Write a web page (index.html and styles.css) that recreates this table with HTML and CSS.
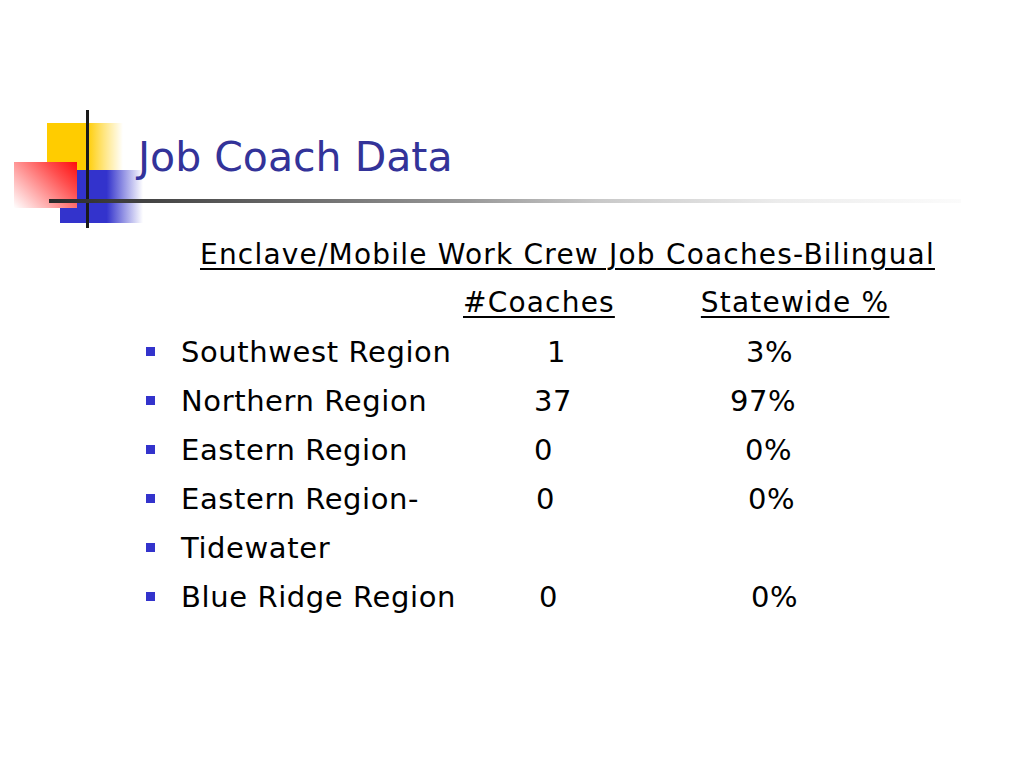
FILE: index.html
```html
<!DOCTYPE html>
<html>
<head>
<meta charset="utf-8">
<link rel="stylesheet" href="styles.css">
</head>
<body>
<div class="slide">
  <div class="logo">
    <div class="sq yellow"></div>
    <div class="sq blue"></div>
    <div class="sq blue-low"></div>
    <div class="sq red"></div>
    <div class="vline"></div>
    <div class="hline"></div>
  </div>
  <header class="title-wrap">
    <h1 class="title">Job Coach Data</h1>
  </header>
  <main class="body">
    <div class="subhead"><span class="u">Enclave/Mobile Work Crew Job Coaches-Bilingual</span></div>
    <div class="colhead">
      <span class="u h1c">#Coaches</span>
      <span class="u h2c">Statewide %</span>
    </div>
    <ul class="rows">
      <li class="row"><span class="label">Southwest Region</span><span class="num n-a">1</span><span class="pct p-a">3%</span></li>
      <li class="row"><span class="label">Northern Region</span><span class="num n-b">37</span><span class="pct p-b">97%</span></li>
      <li class="row"><span class="label">Eastern Region</span><span class="num n-c">0</span><span class="pct p-c">0%</span></li>
      <li class="row"><span class="label">Eastern Region-</span><span class="num n-d">0</span><span class="pct p-d">0%</span></li>
      <li class="row"><span class="label">Tidewater</span></li>
      <li class="row"><span class="label">Blue Ridge Region</span><span class="num n-e">0</span><span class="pct p-e">0%</span></li>
    </ul>
  </main>
</div>
</body>
</html>
```

FILE: styles.css
```css
html, body {
  margin: 0;
  padding: 0;
  background: #ffffff;
}
.slide {
  position: relative;
  width: 1024px;
  height: 768px;
  overflow: hidden;
  font-family: "DejaVu Sans", Tahoma, sans-serif;
  color: #000;
}
.logo {
  position: absolute;
  left: 0;
  top: 0;
  width: 1024px;
  height: 240px;
}
.sq { position: absolute; }
.yellow {
  left: 47px; top: 123px; width: 76px; height: 47px;
  background: linear-gradient(to right, #ffcc00 0%, #ffcc00 52%, rgba(255,204,0,0.5) 75%, rgba(255,255,255,0) 100%);
}
.blue {
  left: 77px; top: 170px; width: 66px; height: 53px;
  background: linear-gradient(to right, #3333cc 0%, #3333cc 45%, rgba(51,51,204,0.5) 72%, rgba(255,255,255,0) 100%);
}
.blue-low {
  left: 60px; top: 200px; width: 20px; height: 23px;
  background: #3333cc;
}
.red {
  left: 14px; top: 162px; width: 63px; height: 46px;
  background: linear-gradient(225deg, #ff0d0d 0%, #ff5050 30%, #ffa8a8 65%, #ffffff 100%);
}
.vline {
  position: absolute;
  left: 86px; top: 110px; width: 3px; height: 118px;
  background: #1a1a1a;
}
.hline {
  position: absolute;
  left: 49px; top: 199px; width: 912px; height: 4px;
  background: linear-gradient(to right, #2a2a2a 0%, #555 18%, #999 46%, #c8c8c8 60%, #ececec 80%, #fbfbfb 100%);
}
.title-wrap {
  padding: 132px 0 0 138px;
  height: 88px;
}
.title {
  margin: 0;
  font-weight: normal;
  font-size: 41px;
  line-height: 50px;
  color: #333399;
}
.body {
  padding-top: 11px;
  font-size: 29px;
  letter-spacing: 0.6px;
}
.u {
  text-decoration: underline;
  text-decoration-thickness: 2px;
  text-underline-offset: 4px;
}
.subhead {
  padding-left: 200px;
  line-height: 47px;
  font-size: 28px;
  letter-spacing: 1.2px;
}
.colhead {
  display: flex;
  line-height: 49px;
  font-size: 28px;
  letter-spacing: 1.2px;
}
.h1c { margin-left: 463px; }
.h2c { margin-left: 86px; }
.rows {
  list-style: none;
  margin: 0;
  padding: 0;
}
.row {
  display: grid;
  grid-template-columns: 9px 379px 195px auto;
  align-items: center;
  height: 49px;
  padding-left: 146px;
}
.row::before {
  content: "";
  width: 9px;
  height: 9px;
  background: #3333cc;
}
.label { margin-left: 26px; white-space: nowrap; }
.n-a { padding-left: 13px; }
.n-b { padding-left: 0; }
.n-c { padding-left: 0; }
.n-d { padding-left: 2px; }
.n-e { padding-left: 5px; }
.p-a { padding-left: 17px; }
.p-b { padding-left: 1px; }
.p-c { padding-left: 16px; }
.p-d { padding-left: 19px; }
.p-e { padding-left: 22px; }
```
